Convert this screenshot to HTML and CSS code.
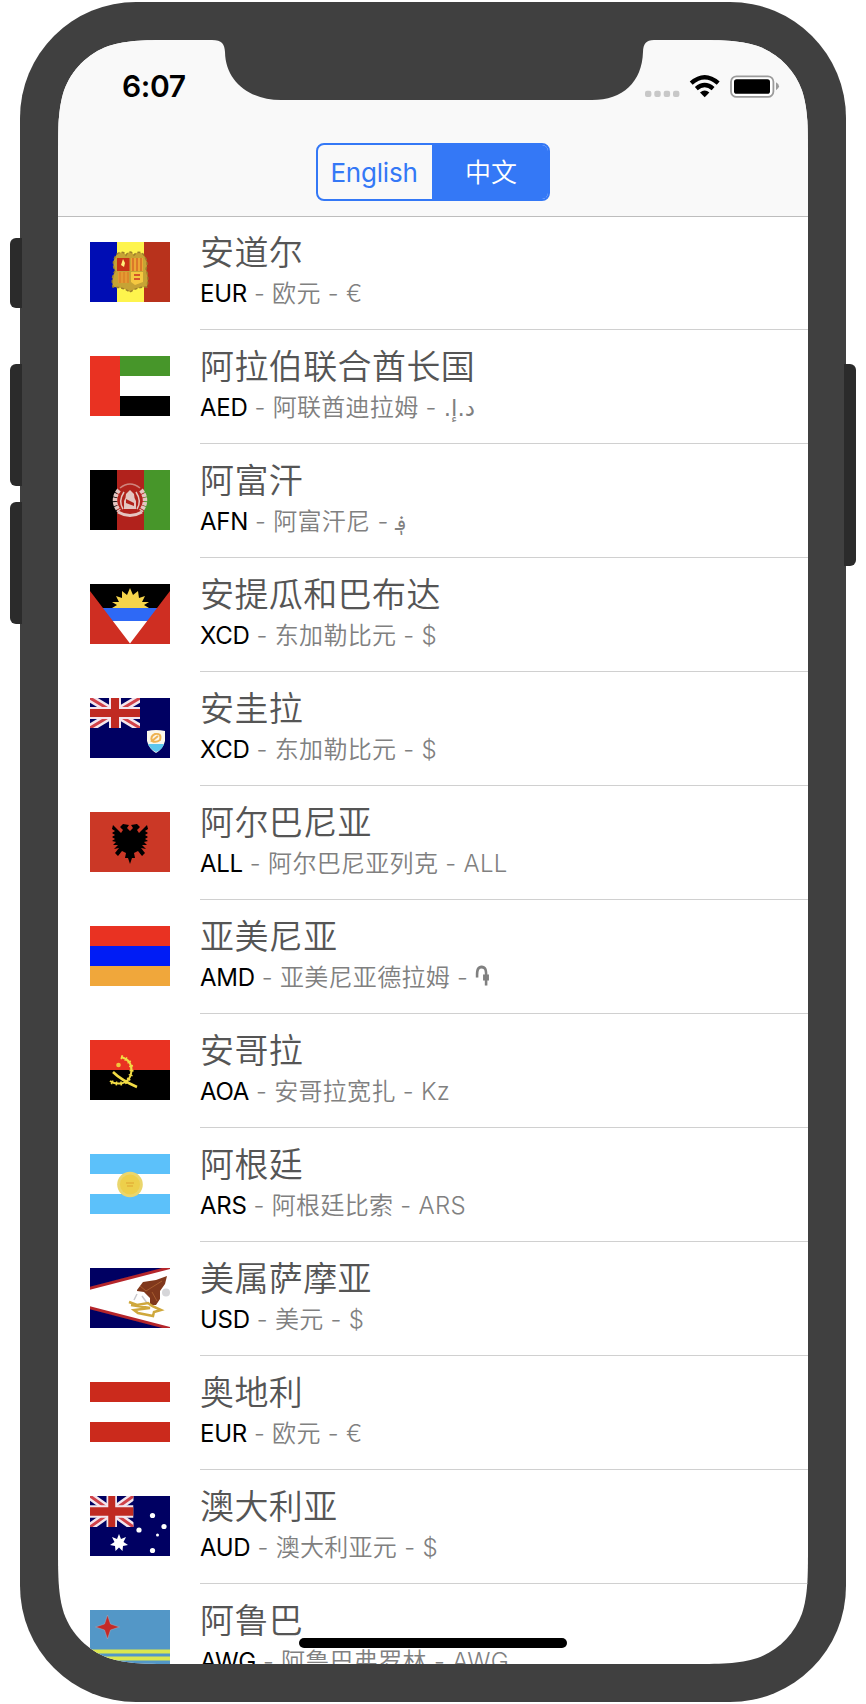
FILE: index.html
```html
<!DOCTYPE html>
<html lang="zh-CN">
<head>
<meta charset="utf-8">
<title>Currencies</title>
<link rel="stylesheet" href="styles.css">
</head>
<body>
<svg class="defs" width="0" height="0">
  <defs>
    <filter id="soft" x="-10%" y="-10%" width="120%" height="120%"><feGaussianBlur stdDeviation="0.6"/></filter>
    <symbol id="jack" viewBox="0 0 50 30" preserveAspectRatio="none">
      <rect width="50" height="30" fill="#000562"/>
      <path d="M0 0L50 30M50 0L0 30" stroke="#f3e6ee" stroke-width="8"/>
      <path d="M0 0L50 30M50 0L0 30" stroke="#d0424a" stroke-width="3"/>
      <path d="M25 0V30M0 15H50" stroke="#f3e6ee" stroke-width="12"/>
      <path d="M25 0V30M0 15H50" stroke="#c02a22" stroke-width="8"/>
    </symbol>
  </defs>
</svg>
<div class="phone">
  <i class="key key-mute"></i><i class="key key-up"></i><i class="key key-down"></i><i class="key key-power"></i>
  <main class="screen">
    <header class="top">
      <div class="status">
        <span class="time">6:07</span>
        <svg class="indicators" width="136" height="24" viewBox="0 0 136 24">
          <g fill="#c8c8c8"><rect x="1" y="15.700" width="6.4" height="6.4" rx="2"/><rect x="10.3" y="15.700" width="6.4" height="6.4" rx="2"/><rect x="19.7" y="15.700" width="6.4" height="6.4" rx="2"/><rect x="29" y="15.700" width="6.4" height="6.4" rx="2"/></g>
          <g fill="none" stroke="#000" stroke-width="4.4"><path d="M47.2 8.2Q60.7-3.6 74.2 8.2"/><path d="M52.3 13.6Q60.7 6.4 69.1 13.6"/></g>
          <path d="M60.7 22.2L56 17.4Q60.7 13.6 65.4 17.4Z" fill="#000"/>
          <rect x="87" y="1.3" width="42.4" height="20.6" rx="5.5" fill="#fff" stroke="#9b9b9b" stroke-width="1.8"/>
          <rect x="90" y="4.200" width="36" height="14.600" rx="2.6"/>
          <path d="M132 7.3Q135 9 135 11.3T132 15.3Z" fill="#9b9b9b"/>
        </svg>
      </div>
      <div class="segmented"><span class="seg">English</span><span class="seg active">中文</span></div>
    </header>
    <ul class="list">
      <li class="row">
        <svg class="flag" viewBox="0 0 80 60"><g filter="url(#soft)"><path d="M-5-5H27V65H-5Z" fill="#0010b4"/><path d="M27-5H54V65H27Z" fill="#fef44e"/><path d="M54-5H85V65H54Z" fill="#b8301c"/>
          <path d="M27 12Q33 8 36 13Q40 7 44 13Q48 8 53 12Q59 20 56 27Q59 35 57 45Q47 45 40 50Q33 45 23 45Q21 36 25 29Q21 20 27 12Z" fill="#c6a334"/><path d="M27 12Q33 8 36 13Q40 7 44 13Q48 8 53 12Q59 20 56 27Q59 35 57 45Q47 45 40 50Q33 45 23 45Q21 36 25 29Q21 20 27 12Z" fill="none" stroke="#9c7f2c" stroke-width="1.500" stroke-dasharray="3 2"/><rect x="27" y="16" width="12.5" height="13" fill="#c83019"/><path d="M33 17L35 21L34 25L31 23Z" fill="#fff27a"/><rect x="41" y="16" width="12" height="13" fill="#eda634"/><path d="M43 16V29M47 16V29M51 16V29" stroke="#d05b24" stroke-width="1.2"/><rect x="28" y="30" width="11" height="11" fill="#e59a30"/><path d="M30 30V41M34 30V41M38 30V41" stroke="#d57628" stroke-width="1"/><path d="M41 30H53V40L45 43L41 40Z" fill="#f5c840"/><path d="M44 33H50M44 37H50" stroke="#d4562a" stroke-width="1.8"/></g></svg>
        <div class="info"><h2>安道尔</h2><p><b>EUR</b> - 欧元 - €</p></div></li>
      <li class="row">
        <svg class="flag" viewBox="0 0 80 60"><g filter="url(#soft)"><path d="M-5-5H85V20H-5Z" fill="#479629"/><path d="M-5 20H85V40H-5Z" fill="#fff"/><path d="M-5 40H85V65H-5Z"/><path d="M-5-5H30V65H-5Z" fill="#e93323"/></g></svg>
        <div class="info"><h2>阿拉伯联合酋长国</h2><p><b>AED</b> - 阿联酋迪拉姆 - <bdi class="arabic" dir="rtl">د.إ.</bdi></p></div></li>
      <li class="row">
        <svg class="flag" viewBox="0 0 80 60"><g filter="url(#soft)"><path d="M-5-5H27V65H-5Z"/><path d="M27-5H54V65H27Z" fill="#b1241b"/><path d="M54-5H85V65H54Z" fill="#479629"/><g fill="none" stroke="#e4c5c1"><path d="M30 18Q40 10 50 18" stroke-width="1.500" opacity=".6"/><path d="M29 20Q21 30 29 41M51 20Q59 30 51 41" stroke-width="4.500" stroke-dasharray="3.500 .8"/><path d="M28 42Q40 49 52 42" stroke-width="3"/><path d="M34 22Q28 31 33 39M46 22Q52 31 47 39" stroke-width="1.500"/></g><path d="M34 39V31Q36 28 36 24L40 20L44 24Q44 28 46 31V39Z" fill="#e4c5c1"/><path d="M36 29L44 33V36L36 33Z" fill="#b1241b"/></g></svg>
        <div class="info"><h2>阿富汗</h2><p><b>AFN</b> - 阿富汗尼 - <bdi class="arabic afghani">؋</bdi></p></div></li>
      <li class="row">
        <svg class="flag" viewBox="0 0 80 60"><g filter="url(#soft)"><path d="M-5-5H85V65H-5Z"/><path d="M22 24L27 21L22 18L29 18L26 12L32 14L32 7L37 11L40 4L43 11L48 7L49 14L55 12L52 18L59 18L54 21L59 24Z" fill="#f5d44b"/><path d="M5 24H75V38H5Z" fill="#2e69f6"/><path d="M5 37H75V65H5Z" fill="#fff"/><path d="M-5 0L0 7L40 59.5L80 7L85 0V65H-5Z" fill="#cf2e22"/></g></svg>
        <div class="info"><h2>安提瓜和巴布达</h2><p><b>XCD</b> - 东加勒比元 - $</p></div></li>
      <li class="row">
        <svg class="flag" viewBox="0 0 80 60"><g filter="url(#soft)"><path d="M-5-5H85V65H-5Z" fill="#000562"/><use href="#jack" width="50" height="30"/><path d="M57 33Q66 31 75 33V43Q73 51 66 55Q59 51 57 43Z" fill="#fbf7ec"/><path d="M58 46H74Q72 52 66 54Q60 51 58 46Z" fill="#5cc6ee"/><path d="M62 43Q60 38 65 36Q72 35 70 42Q66 45 62 43L68 38" fill="none" stroke="#eeb252" stroke-width="2"/></g></svg>
        <div class="info"><h2>安圭拉</h2><p><b>XCD</b> - 东加勒比元 - $</p></div></li>
      <li class="row">
        <svg class="flag" viewBox="0 0 80 60"><g filter="url(#soft)"><path d="M-5-5H85V65H-5Z" fill="#cb3727"/><path d="M40 19L37 16L39 13L33 12L30 15L33 18L31 21L23 13L22 17L25 19L22 21L25 23L22 25L25 27L22 29L26 30L23 33L28 33L24 37L29 36L25 41L28 44L32 39L36 41L35 46L38 46L40 52L42 46L45 46L44 41L48 39L52 44L55 41L51 36L56 37L52 33L57 33L54 30L58 29L55 27L58 25L55 23L58 21L55 19L58 17L57 13L49 21L47 18L50 15L47 12L41 13L43 16Z"/></g></svg>
        <div class="info"><h2>阿尔巴尼亚</h2><p><b>ALL</b> - 阿尔巴尼亚列克 - ALL</p></div></li>
      <li class="row">
        <svg class="flag" viewBox="0 0 80 60"><g filter="url(#soft)"><path d="M-5-5H85V20H-5Z" fill="#e93323"/><path d="M-5 20H85V40H-5Z" fill="#001cf5"/><path d="M-5 40H85V65H-5Z" fill="#f0a73b"/></g></svg>
        <div class="info"><h2>亚美尼亚</h2><p><b>AMD</b> - 亚美尼亚德拉姆 - <span class="dram">֏</span></p></div></li>
      <li class="row">
        <svg class="flag" viewBox="0 0 80 60"><g filter="url(#soft)"><path d="M-5-5H85V30H-5Z" fill="#e93323"/><path d="M-5 30H85V65H-5Z"/><g fill="none" stroke="#f2dc45"><path d="M31 17Q42 20 41.500 31Q40 43 30 43.500Q24 44 20 41" stroke-width="2"/><path d="M31 17Q42 20 41.500 31Q40 43 30 43.500Q24 44 20 41" stroke-width="4" stroke-dasharray="1.500 3"/><path d="M23 32Q31 40 47 47" stroke-width="2.500"/></g><circle cx="28.500" cy="25" r="2.300" fill="#f2c63c"/></g></svg>
        <div class="info"><h2>安哥拉</h2><p><b>AOA</b> - 安哥拉宽扎 - Kz</p></div></li>
      <li class="row">
        <svg class="flag" viewBox="0 0 80 60"><g filter="url(#soft)"><path d="M-5-5H85V65H-5Z" fill="#5bc1fa"/><path d="M-5 20H85V40H-5Z" fill="#fff"/><circle cx="40" cy="30.500" r="12.800" fill="#ead66d"/><circle cx="40" cy="30.500" r="10" fill="#edcf4b"/><path d="M36 29H44M37 32H43" stroke="#e6b93c" stroke-width="2"/></g></svg>
        <div class="info"><h2>阿根廷</h2><p><b>ARS</b> - 阿根廷比索 - ARS</p></div></li>
      <li class="row">
        <svg class="flag" viewBox="0 0 80 60"><g filter="url(#soft)"><path d="M-5-5H85V65H-5Z" fill="#000562"/><path d="M-5 22L80-1H90V61H80L-5 38Z" fill="#fff"/><path d="M-5 21.500L82-1M-5 38.500L82 61" stroke="#b5252c" stroke-width="3"/><path d="M47 22L53 14L66 12L77 8L75 16L70 23L70 31L66 37H60V30L54 24L47 23Z" fill="#80391b"/><path d="M50 18L56 23L72 13M62 24L67 33" stroke="#a65b31" fill="none"/><path d="M47 26L44 32M52 28L57 35" stroke="#c9c9cd" stroke-width="1.500"/><circle cx="76" cy="24.500" r="4" fill="#d6d6d9"/><path d="M39 34L47 37L58 35L62 38L71 42L64 44L63 48L48 45L44 42L60 40L41 37" fill="none" stroke="#cfa83c" stroke-width="2.500"/></g></svg>
        <div class="info"><h2>美属萨摩亚</h2><p><b>USD</b> - 美元 - $</p></div></li>
      <li class="row">
        <svg class="flag" viewBox="0 0 80 60"><g filter="url(#soft)"><path d="M-5-5H85V65H-5Z" fill="#cb2b1e"/><path d="M-5 20H85V40H-5Z" fill="#fff"/></g></svg>
        <div class="info"><h2>奥地利</h2><p><b>EUR</b> - 欧元 - €</p></div></li>
      <li class="row">
        <svg class="flag" viewBox="0 0 80 60"><g filter="url(#soft)"><path d="M-5-5H85V65H-5Z" fill="#000562"/><use href="#jack" width="43.500" height="31"/><path d="M29 38L31 43L36 41L33.500 46L38 49L33 50L32.500 55L29 51.500L25.500 55L25 50L20 49L24.500 46L22 41L27 43Z" fill="#fff"/><g fill="#fff"><circle cx="62.500" cy="19.500" r="2.600"/><circle cx="49" cy="34" r="2.600"/><circle cx="74" cy="30.500" r="2.600"/><circle cx="62.500" cy="54.500" r="2.600"/><circle cx="67.500" cy="39" r="1.500"/></g></g></svg>
        <div class="info"><h2>澳大利亚</h2><p><b>AUD</b> - 澳大利亚元 - $</p></div></li>
      <li class="row">
        <svg class="flag" viewBox="0 0 80 60"><g filter="url(#soft)"><path d="M-5-5H85V65H-5Z" fill="#5397c7"/><path d="M-5 41.500H85M-5 48.500H85" stroke="#dbe750" stroke-width="4"/><path d="M17.500 5L20.500 14L29.500 17L20.500 20L17.500 29L14.500 20L5.500 17L14.500 14Z" fill="#c52a27" stroke="#a5afc0" stroke-width=".5"/></g></svg>
        <div class="info"><h2>阿鲁巴</h2><p><b>AWG</b> - 阿鲁巴弗罗林 - AWG</p></div></li>
    </ul>
    <i class="home-bar"></i>
  </main>
  <svg class="notch" width="460" height="62" viewBox="0 0 460 62"><path d="M0 0H460V2H447C439 2 436.200 6 436 14C435 44 416 62 385 62H74C43 62 18.500 44 18 14C17.500 6 15 2 5 2H0Z" fill="#404040"/></svg>
</div>
</body>
</html>
```
FILE: styles.css
```css
* { box-sizing: border-box; }
body { margin: 0; background: #fff; font-family: Inter, "Noto Sans CJK SC", sans-serif; }
.defs { position: absolute; }
.phone { position: relative; width: 826px; height: 1700px; margin: 2px 0 0 20px; padding: 38px; background: #404040; border-radius: 116px; }
.key { position: absolute; width: 12px; background: #2b2b2b; border-radius: 6px 0 0 6px; left: -10px; }
.key-mute { top: 236px; height: 70px; }
.key-up { top: 362px; height: 122px; }
.key-down { top: 500px; height: 122px; }
.key-power { left: auto; right: -10px; top: 362px; height: 202px; border-radius: 0 6px 6px 0; }
.screen {
  position: relative; width: 750px; height: 1624px; overflow: hidden; background: #fff;
  clip-path: path("M122.3 0H627.7C662.9 0 680.5 0 699.5 6C720.2 13.500 736.500 29.800 744 50.500C750 69.500 750 87.100 750 122.300V1501.700C750 1536.900 750 1554.500 744 1573.500C736.500 1594.200 720.200 1610.500 699.500 1618C680.500 1624 662.900 1624 627.700 1624H122.300C87.100 1624 69.500 1624 50.500 1618C29.800 1610.500 13.500 1594.200 6 1573.500C0 1554.500 0 1536.900 0 1501.700V122.300C0 87.100 0 69.500 6 50.500C13.500 29.800 29.800 13.500 50.500 6C69.500 0 87.100 0 122.300 0Z");
}
.top { position: relative; z-index: 1; height: 176px; background: #f9f9f9; box-shadow: 0 1px 0 #bdbdbd; }
.status { display: flex; align-items: flex-start; justify-content: space-between; height: 103px; padding: 28px 28px 0 64px; }
.time { font-size: 30px; line-height: 36px; font-weight: 600; letter-spacing: -0.4px; }
.indicators { margin-top: 7px; }
.segmented { display: flex; width: 234px; height: 58px; margin-left: 258px; border: 2px solid #3478f6; border-radius: 8px; overflow: hidden; }
.seg { flex: 0 0 114px; text-align: center; font-size: 26px; line-height: 55px; letter-spacing: -0.2px; color: #3478f6; padding-right: 2px; }
.seg.active { flex-basis: 116px; background: #3478f6; color: #fff; font-weight: 350; letter-spacing: 0; padding: 0 0 0 2px; }
.list { margin: 0; padding: 0; list-style: none; }
.row { display: flex; height: 114px; padding-left: 32px; }
.flag { width: 80px; height: 60px; margin: 26px 30px 0 0; flex: none; overflow: hidden; }
.info { flex: 1; border-bottom: 1px solid #d0d0d0; padding: 13px 0 0; white-space: nowrap; }
h2 { margin: 0 0 1px; font-size: 34px; line-height: 48px; font-weight: 350; letter-spacing: 0.4px; color: #555; }
p { margin: 0; font-size: 24px; line-height: 32px; letter-spacing: 0.3px; font-weight: 350; color: #808080; }
b { font-weight: 400; color: #000; letter-spacing: -0.3px; }
.arabic { font-family: "DejaVu Sans", sans-serif; font-size: 23px; font-weight: 400; line-height: 1; }
.afghani { font-size: 20px; margin-left: -1px; }
.dram { display: inline-block; font-family: "Noto Sans", "DejaVu Sans", sans-serif; font-weight: 700; line-height: 1; transform: scale(0.8, 1.12); transform-origin: 0 80%; }
.home-bar { position: absolute; left: 241px; bottom: 16px; width: 268px; height: 10px; border-radius: 5px; background: #000; }
.notch { position: absolute; left: 187px; top: 36px; }
```
